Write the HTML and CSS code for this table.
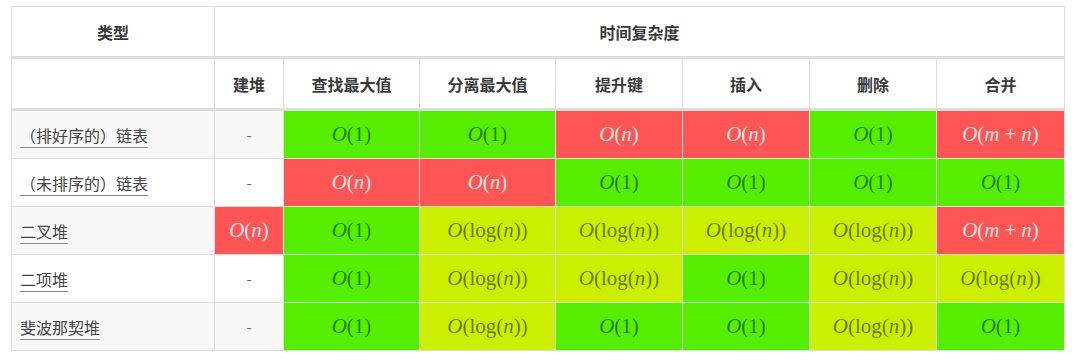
FILE: index.html
```html
<!DOCTYPE html>
<html lang="zh">
<head>
<meta charset="utf-8">
<title>堆的时间复杂度</title>
<link rel="stylesheet" href="styles.css">
</head>
<body>
<div class="wrap">
<table class="heap">
  <colgroup>
    <col class="c-type">
    <col class="c-build">
    <col class="c-wide">
    <col class="c-wide">
    <col class="c-mid">
    <col class="c-mid">
    <col class="c-mid">
    <col class="c-last">
  </colgroup>
  <thead>
    <tr class="h1">
      <th>类型</th>
      <th colspan="7">时间复杂度</th>
    </tr>
    <tr class="h2">
      <th></th>
      <th>建堆</th>
      <th>查找最大值</th>
      <th>分离最大值</th>
      <th>提升键</th>
      <th>插入</th>
      <th>删除</th>
      <th>合并</th>
    </tr>
  </thead>
  <tbody>
    <tr class="odd">
      <td class="name"><span class="link">（排好序的）链表</span></td>
      <td class="none">-</td>
      <td class="good"><span class="m"><i>O</i>(1)</span></td>
      <td class="good"><span class="m"><i>O</i>(1)</span></td>
      <td class="bad"><span class="m"><i>O</i>(<i>n</i>)</span></td>
      <td class="bad"><span class="m"><i>O</i>(<i>n</i>)</span></td>
      <td class="good"><span class="m"><i>O</i>(1)</span></td>
      <td class="bad"><span class="m"><i>O</i>(<i>m</i><span class="op">+</span><i>n</i>)</span></td>
    </tr>
    <tr>
      <td class="name"><span class="link">（未排序的）链表</span></td>
      <td class="none">-</td>
      <td class="bad"><span class="m"><i>O</i>(<i>n</i>)</span></td>
      <td class="bad"><span class="m"><i>O</i>(<i>n</i>)</span></td>
      <td class="good"><span class="m"><i>O</i>(1)</span></td>
      <td class="good"><span class="m"><i>O</i>(1)</span></td>
      <td class="good"><span class="m"><i>O</i>(1)</span></td>
      <td class="good"><span class="m"><i>O</i>(1)</span></td>
    </tr>
    <tr class="odd">
      <td class="name"><span class="link">二叉堆</span></td>
      <td class="bad"><span class="m"><i>O</i>(<i>n</i>)</span></td>
      <td class="good"><span class="m"><i>O</i>(1)</span></td>
      <td class="ok"><span class="m"><i>O</i>(log(<i>n</i>))</span></td>
      <td class="ok"><span class="m"><i>O</i>(log(<i>n</i>))</span></td>
      <td class="ok"><span class="m"><i>O</i>(log(<i>n</i>))</span></td>
      <td class="ok"><span class="m"><i>O</i>(log(<i>n</i>))</span></td>
      <td class="bad"><span class="m"><i>O</i>(<i>m</i><span class="op">+</span><i>n</i>)</span></td>
    </tr>
    <tr>
      <td class="name"><span class="link">二项堆</span></td>
      <td class="none">-</td>
      <td class="good"><span class="m"><i>O</i>(1)</span></td>
      <td class="ok"><span class="m"><i>O</i>(log(<i>n</i>))</span></td>
      <td class="ok"><span class="m"><i>O</i>(log(<i>n</i>))</span></td>
      <td class="good"><span class="m"><i>O</i>(1)</span></td>
      <td class="ok"><span class="m"><i>O</i>(log(<i>n</i>))</span></td>
      <td class="ok"><span class="m"><i>O</i>(log(<i>n</i>))</span></td>
    </tr>
    <tr class="odd">
      <td class="name"><span class="link">斐波那契堆</span></td>
      <td class="none">-</td>
      <td class="good"><span class="m"><i>O</i>(1)</span></td>
      <td class="ok"><span class="m"><i>O</i>(log(<i>n</i>))</span></td>
      <td class="good"><span class="m"><i>O</i>(1)</span></td>
      <td class="good"><span class="m"><i>O</i>(1)</span></td>
      <td class="ok"><span class="m"><i>O</i>(log(<i>n</i>))</span></td>
      <td class="good"><span class="m"><i>O</i>(1)</span></td>
    </tr>
  </tbody>
</table>
</div>
</body>
</html>
```

FILE: styles.css
```css
html, body {
  margin: 0;
  padding: 0;
  background: #fff;
}

.wrap {
  padding: 6px 0 0 11px;
}

.heap {
  border-collapse: collapse;
  table-layout: fixed;
  width: 1054px;
  border: 1px solid #ddd;
  font-family: "Noto Sans CJK SC", "Noto Sans", sans-serif;
  font-size: 16px;
  color: #444;
}

.c-type { width: 203px; }
.c-build { width: 69px; }
.c-wide { width: 136px; }
.c-mid { width: 127px; }
.c-last { width: 128px; }

.heap th,
.heap td {
  border: 1px solid #ddd;
  padding: 0 8px;
  text-align: center;
  vertical-align: middle;
}

.heap th {
  height: 49px;
  font-weight: bold;
  font-size: 16px;
  color: #3a3a3a;
  background: #fff;
  border-bottom: 3px solid #ddd;
}

.heap td {
  height: 47px;
}

.heap tbody tr {
  background: #fff;
}

.heap tbody tr.odd {
  background: #f8f8f8;
}

.heap td.name {
  text-align: left;
  padding-left: 8px;
}

.link {
  color: #444;
  text-decoration: underline;
  text-decoration-color: #888;
  text-underline-offset: 5px;
}

.none {
  color: #666;
  font-size: 15px;
}

.good { background: #5e0; }
.ok { background: #ce0; }
.bad { background: #f55; }

.m {
  font-family: "Liberation Serif", "DejaVu Serif", serif;
  font-size: 21px;
  white-space: nowrap;
}

.m i {
  font-style: italic;
}

.good .m,
.ok .m {
  color: rgba(0, 0, 0, 0.5);
}

.bad .m {
  color: #e4e4e4;
}

.op {
  padding: 0 5px;
}
```
